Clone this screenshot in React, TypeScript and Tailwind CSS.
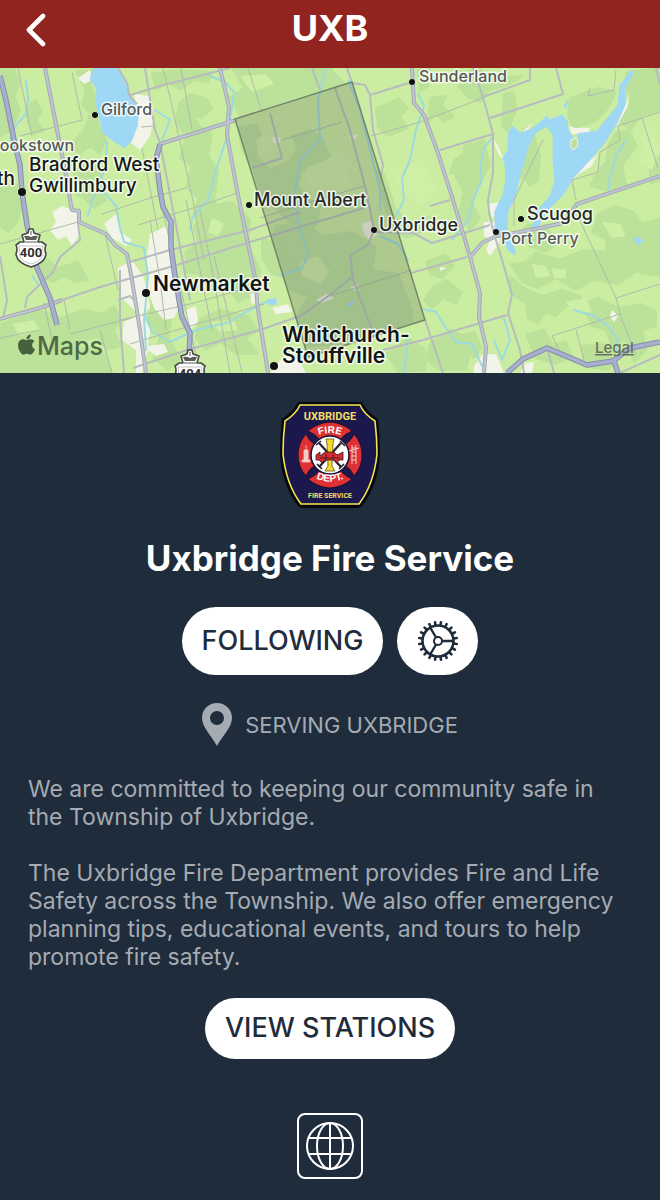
import React from "react";
import { FaApple } from "react-icons/fa";

const forests = [
  "M0 68L14 68L20 84L14 96L20 110L12 130L0 136Z",
  "M76 72L92 70L90 84L96 98L98 124L106 140L100 154L90 146L80 154L70 146L84 130L90 114L82 104L86 90Z",
  "M26 106L36 100L42 112L36 120L44 130L34 134L28 124Z",
  "M74 170L92 162L102 172L100 188L106 200L94 208L84 198L76 194Z",
  "M180 102L190 94L206 98L212 108L202 118L194 116L200 126L212 134L208 156L218 172L214 200L224 220L206 226L194 214L198 198L186 188L192 166L180 158L186 138L176 122Z",
  "M152 74L176 70L212 72L208 82L194 80L180 90L168 82L156 90Z",
  "M190 122L204 132L196 150L184 146Z",
  "M232 68L330 68L345 84L300 96L270 106L240 116L230 98L244 88Z",
  "M210 206L232 202L250 220L248 246L260 270L252 296L238 302L228 288L212 290L198 274L186 272L186 252L198 242L194 226Z",
  "M238 128L256 124L262 138L256 156L270 170L290 160L298 148L292 136L310 130L322 138L330 156L320 168L302 170L298 184L304 196L320 206L316 226L294 228L278 210L262 200L254 170L242 150Z",
  "M276 226L306 222L322 236L352 232L376 246L372 270L398 274L412 310L412 322L340 344L306 346L296 318L308 296L290 290L270 254Z",
  "M0 188L16 184L24 204L16 224L8 232L0 226Z",
  "M32 264L46 258L58 268L78 262L88 280L76 282L64 276L54 282L42 276Z",
  "M0 324L40 310L60 318L84 310L102 314L114 306L120 318L114 332L122 346L106 350L98 336L74 344L66 356L40 348L16 360L0 350Z",
  "M0 352L60 344L104 352L112 373L0 373Z",
  "M152 302L164 294L172 314L168 338L180 358L168 370L154 358L160 336L148 322Z",
  "M198 320L220 310L248 316L258 330L246 338L258 354L236 354L220 342L206 350L196 338Z",
  "M262 238L284 248L298 262L290 278L272 274L262 258Z",
  "M376 108L388 104L398 98L408 108L400 116L408 128L388 136L378 128Z",
  "M418 70L430 68L428 86L420 92Z",
  "M430 98L446 96L442 106L454 116L444 122L436 114L428 122Z",
  "M470 70L482 70L486 78L522 76L510 84L490 90L480 102L466 96L458 86L468 82Z",
  "M504 94L514 92L516 110L508 132L502 126Z",
  "M464 146L484 140L490 166L480 182L472 204L480 218L470 230L458 216L464 192L454 174L464 162Z",
  "M454 160L466 152L460 170L450 174Z",
  "M570 98L598 88L616 92L608 108L594 122L574 128L568 116Z",
  "M626 72L660 68L660 110L642 116L630 130L618 120L628 104Z",
  "M616 132L630 130L636 146L622 166L626 184L606 190L590 186L596 174L606 162L608 146Z",
  "M650 166L660 156L660 180L650 184Z",
  "M376 170L384 174L396 210L408 222L432 216L422 232L406 238L394 230L384 204Z",
  "M514 146L524 130L534 136L540 156L538 180L530 186L524 176L516 180Z",
  "M598 214L616 206L634 212L642 224L660 218L660 276L636 272L618 284L592 280L576 290L556 278L538 288L522 282L510 264L526 262L536 252L558 260L584 250L606 252L606 240L592 232Z",
  "M528 224L548 230L558 242L546 252L530 246L520 234Z",
  "M510 276L524 288L542 296L562 290L580 296L586 306L566 306L556 316L546 312L538 324L528 318L526 304L510 292Z",
  "M582 304L598 298L618 308L642 304L656 312L656 326L642 330L646 350L634 362L626 340L612 346L606 330L592 326Z",
  "M526 334L544 330L552 344L566 342L572 356L556 364L536 358Z",
  "M582 346L604 344L618 358L608 370L584 366Z",
  "M426 262L446 254L454 266L442 278L430 274Z",
  "M434 286L446 280L462 292L456 304L444 298L432 308L424 300Z",
  "M430 344L450 330L464 336L470 352L466 370L440 370L426 360Z",
  "M386 354L408 338L424 348L426 370L398 372Z",
  "M458 336L474 332L482 348L474 358L464 350Z",
];

const clearings = [
  "M256 140L268 132L272 146L266 158L258 154Z",
  "M306 168L326 160L340 150L352 160L346 176L358 196L344 206L322 200L308 188Z",
  "M240 76L266 74L274 84L252 92Z",
  "M212 218L224 224L218 236L208 232Z",
  "M300 262L318 256L330 272L320 284L302 276Z",
  "M12 324L34 320L40 330L20 336Z",
  "M602 222L620 224L626 236L612 238Z",
  "M532 264L546 266L550 276L536 278Z",
  "M566 302L586 298L592 312L574 314Z",
  "M644 124L654 130L660 150L652 170L640 162Z",
  "M210 322L234 320L238 330L220 332Z",
  "M552 268L566 270L566 278L554 278Z",
  "M50 150L62 160L60 180L52 172Z",
  "M390 170L420 160L440 190L420 206L404 196Z",
];

const towns = [
  "M52 212L62 206L78 212L80 234L72 246L66 236L58 240L50 230L56 222Z",
  "M134 94L150 96L154 118L150 136L140 150L130 142L138 126L136 110Z",
  "M78 78L90 70L92 80L84 84Z",
  "M104 224L116 214L120 232L132 240L126 246L112 238Z",
  "M150 234L166 226L170 250L174 278L180 306L174 318L164 320L154 308L148 290L146 264Z",
  "M118 268L132 260L144 278L150 308L140 316L128 304L120 296Z",
  "M124 322L142 314L150 330L148 346L164 344L168 352L156 356L148 350L142 373L136 373L136 350L122 340Z",
  "M186 310L196 306L198 322L188 332Z",
  "M250 294L258 292L260 302L252 304Z",
  "M272 308L288 304L292 312L276 314Z",
  "M484 222L496 222L500 242L490 256L486 250L490 240L484 236Z",
  "M488 204L498 202L502 208L492 218Z",
  "M492 136L498 146L504 160L498 154Z",
  "M474 366L482 355L496 354L504 373L474 373Z",
  "M526 363L534 362L532 373L520 373Z",
  "M362 224L372 220L378 234L370 240L364 234Z",
  "M272 137L280 137L280 143L273 143Z",
  "M348 136L358 134L354 140Z",
  "M350 288L358 284L356 291Z",
  "M316 300L326 294L334 298L322 303Z",
  "M612 310L618 316L614 322L610 316Z",
  "M626 104L629 92L628 106L618 124L614 126Z",
  "M520 134L532 123L530 127L522 136Z",
  "M588 162L598 154L592 166L576 176L572 180Z",
  "M566 118L569 126L576 128L590 128L588 134L572 134Z",
  "M518 176L519 184L517 188Z",
  "M284 356L300 362L306 373L270 373Z",
  "M440 267L447 268L440 271Z",
];

const lakes = [
  "M94 68L90 79L97 89L96 103L100 120L103 133L115 142L125 148L132 140L137 126L139 110L131 98L127 84L118 70L118 68Z",
  "M495 228L495 211L503 195L506 180L505 165L503 158L508 150L508 135L512 126L517 130L520 133L530 130L537 125L547 116L549 120L562 115L567 121L568 130L573 138L573 143L578 141L577 134L597 131L610 115L618 105L620 85L632 70L634 72L625 88L625 105L617 123L603 145L587 163L573 178L563 195L547 211L537 228L532 227L537 211L550 196L555 181L553 161L553 135L547 126L535 133L528 148L520 175L515 198L508 211L507 232L515 250L515 255L508 250L502 236Z",
  "M634 239L638 237L643 241L638 245Z",
  "M564 106L568 100L566 108Z",
  "M267 301L276 298L276 304L270 305Z",
  "M347 304L354 301L350 307Z",
];

const creeks = [
  "M26 80L28 98L26 114L14 128L10 140",
  "M107 142L106 160L100 185L92 200L88 216",
  "M155 110L170 120L162 140",
  "M210 76L225 82L234 92L232 108L226 140L216 170L208 200L192 218L190 230",
  "M104 192L116 206L120 228L124 242L144 248L148 276L146 300L144 320L146 350",
  "M32 276L38 284",
  "M146 316L152 332L170 342L196 330L230 322L246 312L270 300",
  "M326 68L318 100L320 140L300 160L294 200L300 230L308 256L302 268L280 276",
  "M418 94L424 106L416 130L410 160L402 178L404 200L396 216",
  "M492 138L484 148L480 166L482 180L474 198L468 220L452 240",
  "M348 80L360 110L370 150L380 190L380 210",
  "M380 236L398 244L408 260",
  "M423 309L436 312L446 328L456 342L472 344L482 366",
  "M504 318L510 340L502 360L494 340",
  "M574 310L594 316L608 326L618 340L616 352",
  "M626 140L616 156L610 176L608 190",
  "M408 340L404 373",
];

const lanes = [
  "M18 68L32 136", "M72 72L82 120L20 136", "M163 68L172 106L192 196L204 260",
  "M181 68L192 130", "M0 244L78 222", "M142 148L158 230",
  "M141 127L155 126", "M105 234L118 290", "M102 214L150 198L186 188",
  "M138 225L200 206L240 192", "M200 210L214 280L230 373", "M214 256L232 330L242 373",
  "M120 320L190 304L262 284", "M130 344L190 326L264 304",
  "M70 334L132 318", "M100 330L112 373", "M64 300L70 330", "M44 302L54 350",
  "M0 338L40 330", "M248 68L262 112", "M282 140L342 122",
  "M371 136L420 122L483 98", "M543 140L514 200L514 226", "M590 88L588 96L614 90L616 70",
  "M660 112L618 126L620 140L600 152L598 172L572 180L576 200",
  "M642 118L658 168", "M574 206L586 234L604 272L616 298L622 320L636 355",
  "M616 298L660 284", "M552 336L620 314", "M552 336L560 352", "M576 330L584 360",
  "M330 296L412 270", "M260 218L310 202L364 186",
  "M160 200L172 250L200 373", "M186 200L212 330", "M150 220L160 280L166 330",
];

const roads = [
  "M45 68L58 135L68 185L70 200L72 210L79 211L79 222L106 234L115 245L127 254L132 280L140 330L146 373",
  "M220 68L229 107L227 135L237 190L255 278L258 310L268 373",
  "M412 68L414 103L424 115L437 150L453 200L463 233L470 257L480 293L479 317L486 347L484 373",
  "M160 144L195 133L236 120",
  "M660 176L577 204L563 223L530 230L497 236L483 242L470 257",
  "M0 319L43 307L62 300",
];

const minorRoads = [
  "M118 68L127 83L129 95L137 104", "M130 95L160 86L230 68", "M145 68L155 130L160 143L174 215L190 300",
  "M347 68L352 83L365 85L370 95L373 130L383 165L381 176", "M370 95L412 82",
  "M473 68L483 97L493 134L493 173L488 200L489 212L493 230L505 270L512 295L508 313L520 350L524 373",
  "M530 68L530 80L483 97", "M556 68L563 94L490 118", "M440 150L493 134",
  "M411 273L467 257", "M374 232L413 233L432 243L490 225", "M425 320L443 373",
  "M383 350L423 340L507 315", "M62 300L100 287L170 267L250 242L330 218L364 208",
  "M118 300L130 296L134 300", "M130 262L170 250L250 230L300 212",
  "M78 223L80 240L60 257L53 272L27 297L25 308", "M0 256L7 300L3 318",
  "M120 270L120 320L124 373",
  "M133 368L187 350L260 330L300 316L330 295L352 277", "M270 113L282 158L252 168",
  "M335 88L350 130L366 190L374 230L368 245L350 255L353 280L372 330", "M312 68L320 90", "M656 68L660 84", "M430 206L450 200",
  "M548 351L554 373", "M620 373L660 355",
];

const highways = [
  "M0 76L6 100L14 140L20 165L22 192L27 225L37 268L50 298L57 325",
  "M160 144L156 159L160 190L163 207L171 222L171 247L175 277L182 317L190 333L189 360",
  "M507 373L523 359L547 348L587 365L613 361L630 348L660 342",
  "M614 361L618 373",
];

type Place = { x: number; y: number; lines: string[]; size: string; dot?: [number, number, number] };

const places: Place[] = [
  { x: 101, y: 115, lines: ["Gilford"], size: "text-[16px] font-medium fill-[#555a55]", dot: [95, 115, 3] },
  { x: 419, y: 82, lines: ["Sunderland"], size: "text-[16px] font-medium fill-[#555a55]", dot: [412, 82, 3] },
  { x: -12, y: 151, lines: ["Cookstown"], size: "text-[16px] font-medium fill-[#555a55]" },
  { x: 501, y: 244, lines: ["Port Perry"], size: "text-[16px] font-medium fill-[#555a55]", dot: [496, 232, 3] },
  { x: -3, y: 185, lines: ["th"], size: "text-[19px] font-medium fill-[#151a17]" },
  { x: 29, y: 171, lines: ["Bradford West", "Gwillimbury"], size: "text-[19px] font-medium fill-[#151a17]", dot: [22, 192, 4] },
  { x: 254, y: 206, lines: ["Mount Albert"], size: "text-[18px] font-medium fill-[#252a26]", dot: [249, 205, 3] },
  { x: 379, y: 231, lines: ["Uxbridge"], size: "text-[18px] font-medium fill-[#252a26]", dot: [374, 230, 3] },
  { x: 527, y: 220, lines: ["Scugog"], size: "text-[18px] font-medium fill-[#252a26]", dot: [521, 219, 3] },
  { x: 153, y: 291, lines: ["Newmarket"], size: "text-[21px] font-semibold fill-[#101411]", dot: [146, 293, 4] },
  { x: 282, y: 342, lines: ["Whitchurch-", "Stouffville"], size: "text-[21px] font-semibold fill-[#101411]", dot: [274, 366, 4] },
];

function Shield({ x, y, label }: { x: number; y: number; label: string }) {
  return (
    <g transform={`translate(${x} ${y})`}>
      <path
        d="M-2 -23H2L3 -19L9 -17L7 -10H11L15 -7Q13 -3 15 2Q14 11 0 15Q-14 11 -15 2Q-13 -3 -15 -7L-11 -10H-7L-9 -17L-3 -19Z"
        fill="#fff" stroke="#464a46" strokeWidth="1.6" strokeLinejoin="round"
      />
      <path d="M-7 -16L-5 -12H5L7 -16Q3 -17 0 -15Q-3 -17 -7 -16Z" fill="#5a5e5a" />
      <path d="M-6 -10H6M0 -21V-17" stroke="#5a5e5a" />
      <path d="M-12 -6H12Q11 -2 12 2Q11 9 0 12Q-11 9 -12 2Q-11 -2 -12 -6Z" fill="none" stroke="#b4b7b4" strokeWidth="0.8" />
      <text y="5" textAnchor="middle" className="fill-[#2f2f2f] text-[13px] font-bold font-['Roboto',sans-serif]" stroke="#fff" strokeWidth="1" paintOrder="stroke">{label}</text>
    </g>
  );
}

function CoverageMap() {
  return (
    <svg viewBox="0 68 660 305" className="block h-auto w-full" role="img" aria-label="Coverage map">
      <rect y="68" width="660" height="305" fill="#cbeda1" />
      <g fill="#bce19a" stroke="#bce19a" strokeWidth="2" strokeLinejoin="round">
        {forests.map((d) => <path key={d} d={d} />)}
      </g>
      <g fill="#cfefa6">
        {clearings.map((d) => <path key={d} d={d} />)}
      </g>
      <g fill="#f3f4e9">{towns.map((d) => <path key={d} d={d} />)}</g>
      <g fill="none" stroke="#9ddae0" strokeWidth="2" strokeLinejoin="round" strokeLinecap="round">
        {creeks.map((d) => <path key={d} d={d} />)}
      </g>
      <g fill="#9fd8f5" stroke="#9fd8f5" strokeLinejoin="round">{lakes.map((d) => <path key={d} d={d} />)}</g>
      <path d="M571 140L577 138L578 146L573 150L570 146Z" fill="#bce19a" stroke="#f3f4e9" />
      <g fill="none" strokeLinejoin="round">
        <g stroke="#b0baac" strokeWidth="1">{lanes.map((d) => <path key={d} d={d} />)}</g>
        <g stroke="#b6bcbf" strokeWidth="2">{minorRoads.map((d) => <path key={d} d={d} />)}</g>
        <g stroke="#a3a9b3" strokeWidth="4">{roads.map((d) => <path key={d} d={d} />)}</g>
        <g stroke="#c0c5d2" strokeWidth="2">{roads.map((d) => <path key={d} d={d} />)}</g>
        <g stroke="#868dae" strokeWidth="5.5">{highways.map((d) => <path key={d} d={d} />)}</g>
        <g stroke="#a9b0ce" strokeWidth="3.5">{highways.map((d) => <path key={d} d={d} />)}</g>
      </g>
      <path d="M235 119L352 82L425 320L308 357Z" fill="#64735f" fillOpacity="0.29" stroke="#65735f" strokeOpacity="0.8" strokeWidth="1.5" />
      <Shield x={31} y={252} label="400" />
      <Shield x={190} y={373} label="404" />
      {places.map((p) => (
        <g key={p.lines[0]}>
          {p.dot && <circle cx={p.dot[0]} cy={p.dot[1]} r={p.dot[2]} fill="#111" stroke="#fff" strokeOpacity="0.6" paintOrder="stroke" />}
          {p.lines.map((line, i) => (
            <text key={line} x={p.x} y={p.y + i * 21} className={p.size} stroke="#fff" strokeOpacity="0.8" strokeWidth="3" strokeLinejoin="round" paintOrder="stroke">
              {line}
            </text>
          ))}
        </g>
      ))}
      <FaApple x={15} y={333} size={23} color="#48613d" />
      <text x="37" y="355" className="fill-[#4f6945] text-[25px] font-medium">Maps</text>
      <a href="#legal">
        <text x="595" y="353" className="fill-[#65715f] text-[15px] font-medium underline underline-offset-2">Legal</text>
      </a>
    </svg>
  );
}

function Crest() {
  return (
    <svg viewBox="0 0 100 106" className="h-[106px] w-[100px]" role="img" aria-label="Uxbridge Fire Service crest">
      <path d="M18 0H82Q86 9 98 17Q100 34 100 52Q98 84 82 104Q80 106 76 106H24Q20 106 18 104Q2 84 0 52Q0 34 2 17Q14 9 18 0Z" fill="#08080c" />
      <path d="M20 3H80Q84 12 95 19Q97 36 97 52Q94 82 79 102H21Q6 82 3 52Q3 36 5 19Q16 12 20 3Z" fill="#1b184e" stroke="#f3e84e" strokeWidth="1.6" />
      <g className="font-['Roboto',sans-serif] font-bold" textAnchor="middle">
        <text x="50" y="18" className="fill-[#f5dd63] text-[11px]">UXBRIDGE</text>
        <text x="50" y="96" className="fill-[#f5dd63] text-[7px]">FIRE SERVICE</text>
      </g>
      <g fill="#df3033" stroke="#120d24" strokeWidth="0.8">
        <path d="M40 40Q39 34 28 29Q37 21 50 20Q63 21 72 29Q61 34 60 40Z" />
        <path d="M40 66Q39 72 28 77Q37 85 50 86Q63 85 72 77Q61 72 60 66Z" />
        <path d="M37 43Q30 41 26 32Q18 41 18 53Q18 65 26 74Q30 65 37 63Z" />
        <path d="M63 43Q70 41 74 32Q82 41 82 53Q82 65 74 74Q70 65 63 63Z" />
      </g>
      <circle cx="50" cy="53" r="19" fill="#fff" stroke="#171335" strokeWidth="1.5" />
      <path d="M39 41L61 65M61 41L39 65" stroke="#26222a" strokeWidth="2.2" />
      <path d="M36 43L41 39M60 39L65 44M37 62L42 67M59 67L64 62" stroke="#26222a" strokeWidth="1.6" />
      <path d="M46 37H54L53 42L52 64L55 69H45L48 64L47 42Z" fill="#f2d925" stroke="#45411c" strokeWidth="0.7" />
      <path d="M36 53L40 50V54L45 50H54L57 53L63 50V58H59L57 61L54 58H45L42 61L39 58H36Z" fill="#d52c32" stroke="#351820" strokeWidth="0.8" />
      <path d="M40 56H60M46 52V57M53 52V57" stroke="#361821" strokeWidth="0.8" />
      <path d="M24 48H28V58H30V60H22V58H24ZM26 43V48" fill="#f4cfca" stroke="#f4cfca" strokeWidth="0.8" />
      <path d="M72 43V62M76 43V62M72 46H76M72 50H76M72 54H76M72 58H76M69 49L79 46" stroke="#f4cfca" strokeWidth="1" />
      <path id="crest-top" d="M32 36Q50 26 68 36" fill="none" />
      <path id="crest-bottom" d="M31 74Q50 85 69 74" fill="none" />
      <g className="fill-white text-[10px] font-bold font-['Liberation_Sans',sans-serif]" textAnchor="middle">
        <text><textPath href="#crest-top" startOffset="50%">FIRE</textPath></text>
        <text><textPath href="#crest-bottom" startOffset="50%">DEPT.</textPath></text>
      </g>
    </svg>
  );
}

function GearIcon() {
  const teeth = Array.from({ length: 20 }, (_, i) => i * 18);
  return (
    <svg viewBox="-21 -21 42 42" className="size-[42px]" fill="none" stroke="#1f2c3b" aria-hidden="true">
      <circle r="15.5" strokeWidth="2.6" />
      <circle r="4" strokeWidth="2" />
      <path d="M4 0H15M-2 -3.5L-7.5 -13M-2 3.5L-7.5 13" strokeWidth="2.4" />
      {teeth.map((a) => (
        <path key={a} d="M16 0H19" strokeWidth="2.6" strokeLinecap="round" transform={`rotate(${a + 9})`} />
      ))}
    </svg>
  );
}

export default function App() {
  return (
    <div className="min-h-screen bg-[#1f2c3b] font-['Inter',sans-serif]">
      <header className="grid h-[68px] grid-cols-[1fr_auto_1fr] items-start bg-[#922420] pt-2 text-white">
        <button type="button" aria-label="Back" className="flex h-11 w-16 items-center justify-center pl-2">
          <svg viewBox="0 0 20 34" className="h-[34px] w-5" fill="none" stroke="currentColor" strokeWidth="4.6" strokeLinecap="round" strokeLinejoin="round">
            <path d="M17 3L3 17L17 31" />
          </svg>
        </button>
        <h1 className="text-[36px] leading-10 font-bold">UXB</h1>
      </header>
      <CoverageMap />
      <main className="flex flex-col items-center px-7 pt-[29px] pb-5">
        <Crest />
        <h2 className="mt-[27px] text-center text-[35px] leading-[46px] font-bold text-white">Uxbridge Fire Service</h2>
        <div className="mt-[26px] flex gap-[14px]">
          <button type="button" className="h-[68px] rounded-full bg-white px-5 text-[27px] font-medium text-[#1f2c3b]">FOLLOWING</button>
          <button type="button" aria-label="Notification settings" className="flex h-[68px] w-[81px] items-center justify-center rounded-full bg-white">
            <GearIcon />
          </button>
        </div>
        <div className="mt-7 flex items-center gap-[13px] text-[#a5abb3]">
          <svg viewBox="0 0 30 43" className="h-[43px] w-[30px]" fill="currentColor" aria-hidden="true">
            <path fillRule="evenodd" d="M15 0C24 0 30 7 30 15C30 24 21 32 15 43C9 32 0 24 0 15C0 7 6 0 15 0ZM15 8A7 7 0 1 0 15 22A7 7 0 1 0 15 8Z" />
          </svg>
          <p className="text-[22px] leading-7">SERVING UXBRIDGE</p>
        </div>
        <div className="mt-[29px] flex w-full flex-col gap-7 text-[23px] leading-7 text-[#a5abb3]">
          <p>We are committed to keeping our community safe in the Township of Uxbridge.</p>
          <p>The Uxbridge Fire Department provides Fire and Life Safety across the Township. We also offer emergency planning tips, educational events, and tours to help promote fire safety.</p>
        </div>
        <button type="button" className="mt-[27px] h-[61px] rounded-full bg-white px-5 text-[27px] font-medium text-[#1f2c3b]">VIEW STATIONS</button>
        <a href="#website" aria-label="Website" className="mt-[54px] flex size-[66px] items-center justify-center rounded-lg border-2 border-white text-white">
          <svg viewBox="0 0 50 50" className="size-[50px]" fill="none" stroke="currentColor" strokeWidth="2" aria-hidden="true">
            <circle cx="25" cy="25" r="23" />
            <ellipse cx="25" cy="25" rx="13" ry="23" />
            <path d="M25 2V48M4 17H46M4 33H46" />
          </svg>
        </a>
      </main>
    </div>
  );
}
